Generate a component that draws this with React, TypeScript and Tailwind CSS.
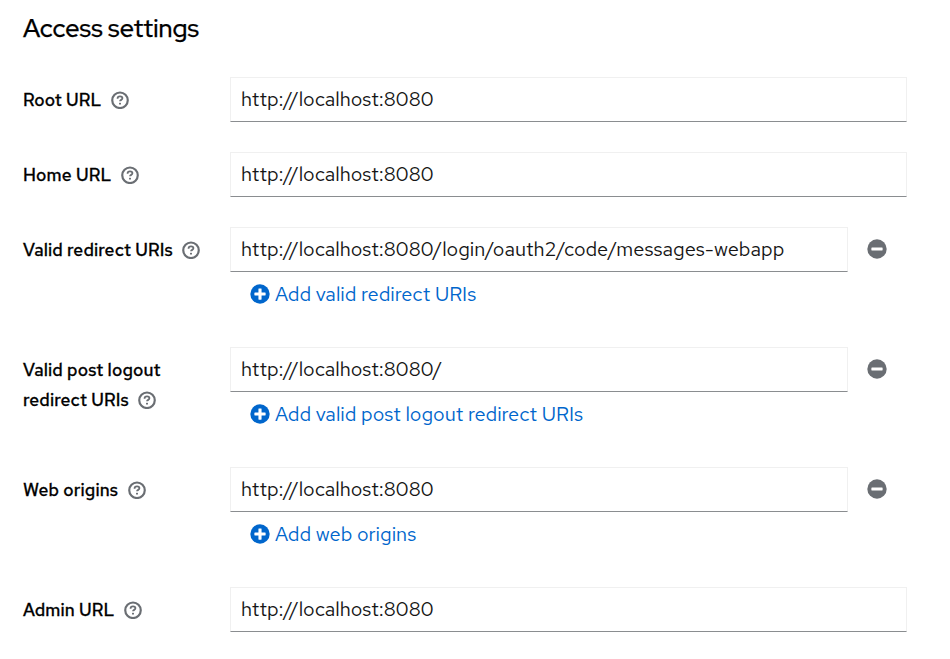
import React from "react";

function Help() {
  return (
    <svg viewBox="0 0 1024 1024" className="h-[18px] w-[18px] shrink-0" fill="none" stroke="#6a6e73">
      <circle cx="512" cy="526" r="442" strokeWidth="124" />
      <path d="M372 436c0-80 55-125 140-125 82 0 138 40 138 108 0 92-138 80-138 170" strokeWidth="100" />
      <rect x="456" y="668" width="112" height="100" rx="30" fill="#6a6e73" stroke="none" />
    </svg>
  );
}

function Symbol({ plus = false }: { plus?: boolean }) {
  return (
    <svg viewBox="0 0 512 512" className={plus ? "mb-0.5 h-5 w-5 shrink-0 text-[#0066cc]" : "mb-0.5 h-5 w-5 shrink-0 text-[#6a6e73]"}>
      <circle cx="256" cy="256" r="248" fill="currentColor" />
      <rect x="112" y="216" width="288" height="80" rx="12" fill="#fff" />
      {plus && <rect x="216" y="112" width="80" height="288" rx="12" fill="#fff" />}
    </svg>
  );
}

type Field = { label: string[]; value: string; add?: string };

const fields: Field[] = [
  { label: ["Root URL"], value: "http://localhost:8080" },
  { label: ["Home URL"], value: "http://localhost:8080" },
  { label: ["Valid redirect URIs"], value: "http://localhost:8080/login/oauth2/code/messages-webapp", add: "Add valid redirect URIs" },
  { label: ["Valid post logout", "redirect URIs"], value: "http://localhost:8080/", add: "Add valid post logout redirect URIs" },
  { label: ["Web origins"], value: "http://localhost:8080", add: "Add web origins" },
  { label: ["Admin URL"], value: "http://localhost:8080" },
];

function Row({ label, value, add }: Field) {
  return (
    <div className="flex">
      <div className="w-[207px] shrink-0 pt-2 text-[17.5px] font-medium tracking-[0.15px] text-black [-webkit-text-stroke:0.3px_black]">
        {label.map((line, i) => (
          <div key={line} className="flex h-[30px] items-center gap-[9.5px] whitespace-nowrap">
            <span>{line}</span>
            {i === label.length - 1 && <Help />}
          </div>
        ))}
      </div>
      <div className="flex-1">
        <div className="flex items-center">
          <div className="flex h-[45px] flex-1 items-center whitespace-nowrap border border-[#f0f0f0] border-b-[#8a8d90] px-[10px] pb-0.5 text-[20px] leading-[30px] tracking-[-0.025px]">
            {value}
          </div>
          {add && <button className="ml-[19px] mr-5"><Symbol /></button>}
        </div>
        {add && (
          <button className="flex h-[45px] items-center gap-[5px] whitespace-nowrap pl-5 text-[20px] leading-[30px] text-[#0066cc]">
            <Symbol plus /><span className="pb-0.5">{add}</span>
          </button>
        )}
      </div>
    </div>
  );
}

export default function App() {
  return (
    <main className="h-[659px] w-[950px] overflow-hidden bg-white pl-[23px] pr-[43px] pt-3.5 font-['Red_Hat_Text','Inter','Liberation_Sans',sans-serif] text-[#151515]">
      <h1 className="mb-[33px] h-[30px] font-['Red_Hat_Display','Red_Hat_Text','Inter',sans-serif] text-[25px] font-medium leading-[30px] tracking-[0.15px] text-black [-webkit-text-stroke:0.25px_black]">Access settings</h1>
      <div className="flex flex-col gap-[30px]">
        {fields.map((field) => <Row key={field.label[0]} {...field} />)}
      </div>
    </main>
  );
}
